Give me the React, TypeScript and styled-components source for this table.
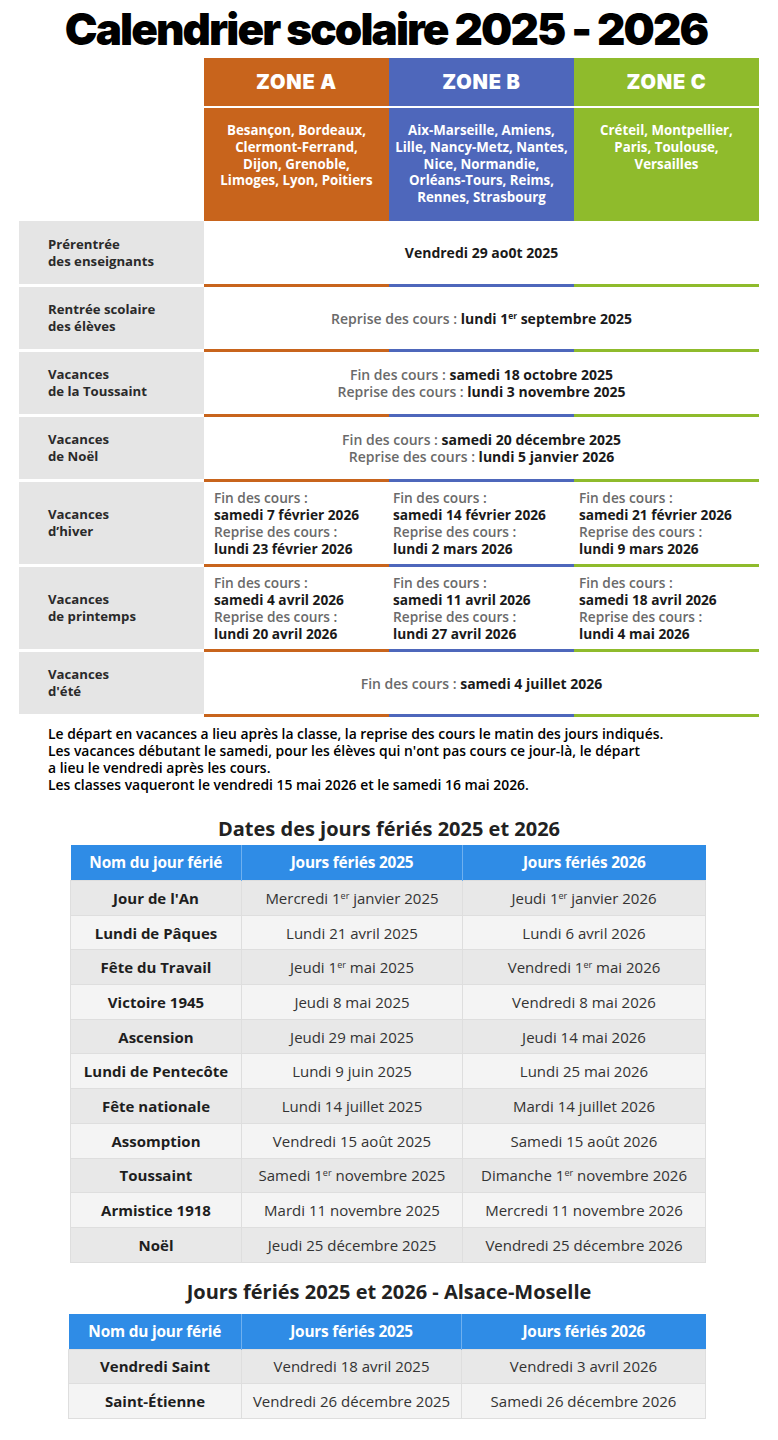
import React from "react";
import styled, { createGlobalStyle } from "styled-components";

const ZONE = { A: "#C8641C", B: "#4E67BB", C: "#8FBB2C" };
const ZONES = [ZONE.A, ZONE.B, ZONE.C];

const GlobalStyle = createGlobalStyle`
  html, body { margin: 0; padding: 0; background: #fff; }
  body { font-family: "Open Sans", sans-serif; }
`;

const Page = styled.main`
  width: 778px;
  display: flex;
  flex-direction: column;
`;

const Title = styled.h1`
  margin: 0;
  height: 58px;
  padding-right: 6px;
  display: flex;
  align-items: center;
  justify-content: center;
  font-family: Inter, sans-serif;
  font-weight: 900;
  font-size: 44px;
  letter-spacing: -1.9px;
  color: #000;
`;

const Calendar = styled.section`
  margin-left: 19px;
  width: 740px;
  display: grid;
  grid-template-columns: repeat(4, 185px);
  font-family: "Open Sans", sans-serif;
  font-size: 14px;
  line-height: 17px;
`;

const Corner = styled.div`
  grid-row: span 2;
`;

const ZoneHead = styled.div<{ $c: string }>`
  height: 48px;
  border-bottom: 2px solid #fff;
  background: ${(p) => p.$c};
  color: #fff;
  display: flex;
  align-items: center;
  justify-content: center;
  font-family: Inter, sans-serif;
  font-weight: 900;
  font-size: 20px;
  letter-spacing: 0.8px;
`;

const Cities = styled.div<{ $c: string }>`
  height: 113px;
  padding-top: 14px;
  box-sizing: border-box;
  background: ${(p) => p.$c};
  color: #fff;
  text-align: center;
  font-weight: 700;
  font-size: 13.3px;
  line-height: 16.8px;
`;

const Label = styled.div<{ $h: number }>`
  height: ${(p) => p.$h}px;
  background: #e5e5e5;
  padding-left: 29px;
  display: flex;
  align-items: center;
  font-size: 13.2px;
  font-weight: 700;
  color: #2a2a2a;
`;

const Merged = styled.div`
  grid-column: span 3;
  display: flex;
  flex-direction: column;
  align-items: center;
  justify-content: center;
  text-align: center;
`;

const Split = styled.div<{ $pad: number }>`
  padding-left: ${(p) => p.$pad}px;
  display: flex;
  flex-direction: column;
  justify-content: center;
  font-size: 13.7px;
`;

const Blank = styled.div`
  height: 3px;
`;

const Rule = styled.div<{ $c: string }>`
  height: 3px;
  background: ${(p) => p.$c};
`;

const Muted = styled.span`
  color: #6a6a6a;
  font-weight: 600;
`;

const Strong = styled.span`
  color: #1a1a1a;
  font-weight: 700;
`;

const SupSmall = styled.sup`
  font-size: 0.6em;
  line-height: 0;
  vertical-align: 0.6em;
`;

const Notes = styled.p`
  margin: 0;
  padding: 8px 0 0 48px;
  font-family: "Open Sans", sans-serif;
  font-weight: 600;
  font-size: 13.9px;
  line-height: 17px;
  color: #000;
`;

const SectionTitle = styled.h2<{ $top: number; $gap: number }>`
  margin: ${(p) => p.$top}px 0 ${(p) => p.$gap}px;
  height: 24px;
  display: flex;
  align-items: center;
  justify-content: center;
  font-family: "Open Sans", sans-serif;
  font-weight: 700;
  font-size: 20px;
  color: #222;
`;

const Table = styled.table<{ $left: number; $w: number }>`
  margin-left: ${(p) => p.$left}px;
  width: ${(p) => p.$w}px;
  border-collapse: collapse;
  table-layout: fixed;
  font-family: "Open Sans", sans-serif;
  font-size: 15px;
`;

const Col = styled.col<{ $w: number }>`
  width: ${(p) => p.$w}px;
`;

const Th = styled.th`
  height: 35px;
  padding: 0;
  background: #2f8ce6;
  color: #fff;
  font-size: 15.4px;
  font-weight: 700;
  letter-spacing: -0.2px;
  text-align: center;
  border-left: 1px solid #6fb0ef;
  &:first-child { border-left: none; }
`;

const Tr = styled.tr<{ $dark: boolean }>`
  background: ${(p) => (p.$dark ? "#e8e8e8" : "#f4f4f4")};
`;

const Td = styled.td<{ $bold?: boolean }>`
  height: 33.7px;
  padding: 0;
  text-align: center;
  color: ${(p) => (p.$bold ? "#1e1e1e" : "#333")};
  font-weight: ${(p) => (p.$bold ? 700 : 400)};
  border: 1px solid #dedede;
`;

const withSup = (text: string) => {
  const parts = text.split("1er");
  return parts.map((p, i) => (
    <React.Fragment key={i}>
      {p}
      {i < parts.length - 1 && (
        <>
          1<SupSmall>er</SupSmall>
        </>
      )}
    </React.Fragment>
  ));
};

const Divider = () => (
  <>
    <Blank />
    {ZONES.map((c) => (
      <Rule key={c} $c={c} />
    ))}
  </>
);

type Pair = { fin: string; rep: string };

const SplitRow = ({ label, h, items }: { label: React.ReactNode; h: number; items: Pair[] }) => (
  <>
    <Label $h={h}>{label}</Label>
    {items.map((it, i) => (
      <Split key={i} $pad={[10, 4, 5][i]}>
        <Muted>Fin des cours :</Muted>
        <Strong>{it.fin}</Strong>
        <Muted>Reprise des cours :</Muted>
        <Strong>{it.rep}</Strong>
      </Split>
    ))}
  </>
);

const holidays: [string, string, string][] = [
  ["Jour de l'An", "Mercredi 1er janvier 2025", "Jeudi 1er janvier 2026"],
  ["Lundi de Pâques", "Lundi 21 avril 2025", "Lundi 6 avril 2026"],
  ["Fête du Travail", "Jeudi 1er mai 2025", "Vendredi 1er mai 2026"],
  ["Victoire 1945", "Jeudi 8 mai 2025", "Vendredi 8 mai 2026"],
  ["Ascension", "Jeudi 29 mai 2025", "Jeudi 14 mai 2026"],
  ["Lundi de Pentecôte", "Lundi 9 juin 2025", "Lundi 25 mai 2026"],
  ["Fête nationale", "Lundi 14 juillet 2025", "Mardi 14 juillet 2026"],
  ["Assomption", "Vendredi 15 août 2025", "Samedi 15 août 2026"],
  ["Toussaint", "Samedi 1er novembre 2025", "Dimanche 1er novembre 2026"],
  ["Armistice 1918", "Mardi 11 novembre 2025", "Mercredi 11 novembre 2026"],
  ["Noël", "Jeudi 25 décembre 2025", "Vendredi 25 décembre 2026"],
];

const alsace: [string, string, string][] = [
  ["Vendredi Saint", "Vendredi 18 avril 2025", "Vendredi 3 avril 2026"],
  ["Saint-Étienne", "Vendredi 26 décembre 2025", "Samedi 26 décembre 2026"],
];

const HolidayTable = ({ rows, left, cols }: { rows: [string, string, string][]; left: number; cols: number[] }) => (
  <Table $left={left} $w={cols.reduce((a, b) => a + b, 0)}>
    <colgroup>
      {cols.map((w, i) => (
        <Col key={i} $w={w} />
      ))}
    </colgroup>
    <thead>
      <tr>
        <Th>Nom du jour férié</Th>
        <Th>Jours fériés 2025</Th>
        <Th>Jours fériés 2026</Th>
      </tr>
    </thead>
    <tbody>
      {rows.map((r, i) => (
        <Tr key={r[0]} $dark={i % 2 === 0}>
          <Td $bold>{r[0]}</Td>
          <Td>{withSup(r[1])}</Td>
          <Td>{withSup(r[2])}</Td>
        </Tr>
      ))}
    </tbody>
  </Table>
);

export default function App() {
  return (
    <>
      <GlobalStyle />
      <Page>
        <Title>Calendrier scolaire 2025 - 2026</Title>
        <Calendar>
          <Corner />
          <ZoneHead $c={ZONE.A}>ZONE A</ZoneHead>
          <ZoneHead $c={ZONE.B}>ZONE B</ZoneHead>
          <ZoneHead $c={ZONE.C}>ZONE C</ZoneHead>
          <Cities $c={ZONE.A}>
            Besançon, Bordeaux,
            <br />
            Clermont-Ferrand,
            <br />
            Dijon, Grenoble,
            <br />
            Limoges, Lyon, Poitiers
          </Cities>
          <Cities $c={ZONE.B}>
            Aix-Marseille, Amiens,
            <br />
            Lille, Nancy-Metz, Nantes,
            <br />
            Nice, Normandie,
            <br />
            Orléans-Tours, Reims,
            <br />
            Rennes, Strasbourg
          </Cities>
          <Cities $c={ZONE.C}>
            Créteil, Montpellier,
            <br />
            Paris, Toulouse,
            <br />
            Versailles
          </Cities>

          <Label $h={63}>
            Prérentrée
            <br />
            des enseignants
          </Label>
          <Merged>
            <Strong>Vendredi 29 ao0t 2025</Strong>
          </Merged>
          <Divider />

          <Label $h={62}>
            Rentrée scolaire
            <br />
            des élèves
          </Label>
          <Merged>
            <div>
              <Muted>Reprise des cours : </Muted>
              <Strong>
                lundi 1<SupSmall>er</SupSmall> septembre 2025
              </Strong>
            </div>
          </Merged>
          <Divider />

          <Label $h={62}>
            Vacances
            <br />
            de la Toussaint
          </Label>
          <Merged>
            <div>
              <Muted>Fin des cours : </Muted>
              <Strong>samedi 18 octobre 2025</Strong>
            </div>
            <div>
              <Muted>Reprise des cours : </Muted>
              <Strong>lundi 3 novembre 2025</Strong>
            </div>
          </Merged>
          <Divider />

          <Label $h={62}>
            Vacances
            <br />
            de Noël
          </Label>
          <Merged>
            <div>
              <Muted>Fin des cours : </Muted>
              <Strong>samedi 20 décembre 2025</Strong>
            </div>
            <div>
              <Muted>Reprise des cours : </Muted>
              <Strong>lundi 5 janvier 2026</Strong>
            </div>
          </Merged>
          <Divider />

          <SplitRow
            label={
              <>
                Vacances
                <br />
                d’hiver
              </>
            }
            h={82}
            items={[
              { fin: "samedi 7 février 2026", rep: "lundi 23 février 2026" },
              { fin: "samedi 14 février 2026", rep: "lundi 2 mars 2026" },
              { fin: "samedi 21 février 2026", rep: "lundi 9 mars 2026" },
            ]}
          />
          <Divider />

          <SplitRow
            label={
              <>
                Vacances
                <br />
                de printemps
              </>
            }
            h={82}
            items={[
              { fin: "samedi 4 avril 2026", rep: "lundi 20 avril 2026" },
              { fin: "samedi 11 avril 2026", rep: "lundi 27 avril 2026" },
              { fin: "samedi 18 avril 2026", rep: "lundi 4 mai 2026" },
            ]}
          />
          <Divider />

          <Label $h={62}>
            Vacances
            <br />
            d'été
          </Label>
          <Merged>
            <div>
              <Muted>Fin des cours : </Muted>
              <Strong>samedi 4 juillet 2026</Strong>
            </div>
          </Merged>
          <Divider />
        </Calendar>

        <Notes>
          Le départ en vacances a lieu après la classe, la reprise des cours le matin des jours indiqués.
          <br />
          Les vacances débutant le samedi, pour les élèves qui n'ont pas cours ce jour-là, le départ
          <br />
          a lieu le vendredi après les cours.
          <br />
          Les classes vaqueront le vendredi 15 mai 2026 et le samedi 16 mai 2026.
        </Notes>

        <SectionTitle $top={23} $gap={5}>
          Dates des jours fériés 2025 et 2026
        </SectionTitle>
        <HolidayTable rows={holidays} left={70} cols={[171, 221, 243]} />

        <SectionTitle $top={17} $gap={10}>
          Jours fériés 2025 et 2026 - Alsace-Moselle
        </SectionTitle>
        <HolidayTable rows={alsace} left={68} cols={[173, 220, 244]} />
      </Page>
    </>
  );
}
